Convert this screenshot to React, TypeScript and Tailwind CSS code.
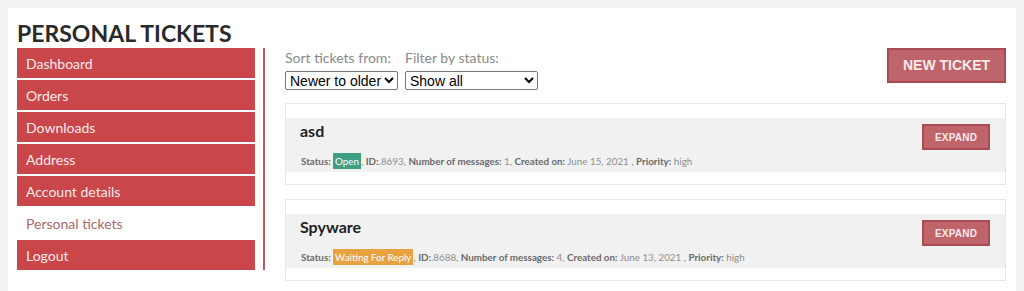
import React, { useState } from 'react';

type Ticket = {
  id: string;
  title: string;
  status: string;
  statusClass: string;
  messages: number;
  created: string;
  priority: string;
};

const MENU = ['Dashboard', 'Orders', 'Downloads', 'Address', 'Account details', 'Personal tickets', 'Logout'];

const TICKETS: Ticket[] = [
  { id: '.8693', title: 'asd', status: 'Open', statusClass: 'bg-[#3f9d82]', messages: 1, created: 'June 15, 2021', priority: 'high' },
  { id: '.8688', title: 'Spyware', status: 'Waiting For Reply', statusClass: 'bg-[#e8a23f]', messages: 4, created: 'June 13, 2021', priority: 'high' },
];

const TicketCard: React.FC<{ ticket: Ticket }> = ({ ticket }) => (
  <div className="border border-[#e7e7e7] bg-white pt-[14px] pb-[12px]">
    <div className="bg-[#f1f1f1] h-[54px] px-[15px] flex justify-between items-start">
      <div className="pt-[1px] pl-[-1px]">
        <h3 className="-ml-[1px] text-[16px] leading-[24px] font-bold text-[#1f1f1f]">{ticket.title}</h3>
        <p className="mt-[10px] text-[9.8px] leading-[16px] text-[#8e8e8e]">
          <span className="font-bold text-[#6a6a6a]">Status: </span>
          <span className={`${ticket.statusClass} text-white px-[2px] py-[2px]`}>{ticket.status}</span>
          , <span className="font-bold text-[#6a6a6a]">ID:</span>{ticket.id},{' '}
          <span className="font-bold text-[#6a6a6a]">Number of messages:</span> {ticket.messages},{' '}
          <span className="font-bold text-[#6a6a6a]">Created on:</span> {ticket.created} ,{' '}
          <span className="font-bold text-[#6a6a6a]">Priority:</span> {ticket.priority}
        </p>
      </div>
      <button className="mt-[6px] w-[68px] h-[26px] bg-[#bf646a] border-2 border-[#aa4a51] text-[#fbeaea] text-[10px] font-bold font-['Liberation_Sans',Arial,sans-serif] tracking-[0.2px]">
        EXPAND
      </button>
    </div>
  </div>
);

export default function App() {
  const [sort, setSort] = useState('new');
  const [filter, setFilter] = useState('all');

  return (
    <div className="min-h-[291px] bg-[#f2f2f2] pt-[8px] pl-[8px] font-['Lato','Noto_Sans',sans-serif]">
      <div className="w-[1008px] min-h-[283px] bg-white pl-[9px] pr-[10px] pt-[11px]">
        <h1 className="text-[23px] leading-[28px] font-bold text-[#2a2a2a]">PERSONAL TICKETS</h1>
        <div className="mt-[1px] flex">
          <nav className="w-[238px] flex flex-col gap-[2px]">
            {MENU.map((item) => {
              const active = item === 'Personal tickets';
              return (
                <a
                  key={item}
                  href="#"
                  className={`h-[30px] flex items-center pl-[9px] text-[14px] ${active ? 'bg-white text-[#a9686c]' : 'bg-[#c9464a] text-[#fbeaea]'}`}
                >
                  {item}
                </a>
              );
            })}
          </nav>
          <div className="ml-[8px] w-[2px] h-[222px] bg-[#c45a5e]" />
          <div className="ml-[20px] flex-1">
            <div className="flex justify-between items-start">
              <div className="flex gap-[7px]">
                <label className="flex flex-col">
                  <span className="text-[14px] leading-[20px] text-[#8a8a8a]">Sort tickets from:</span>
                  <select
                    value={sort}
                    onChange={(e) => setSort(e.target.value)}
                    className="mt-[3px] w-[113px] h-[19px] bg-white border border-[#767676] rounded-[2px] text-[14px] leading-[16px] text-black font-['Liberation_Sans',Arial,sans-serif]"
                  >
                    <option value="new">Newer to older</option>
                    <option value="old">Older to newer</option>
                  </select>
                </label>
                <label className="flex flex-col">
                  <span className="text-[14px] leading-[20px] text-[#8a8a8a]">Filter by status:</span>
                  <select
                    value={filter}
                    onChange={(e) => setFilter(e.target.value)}
                    className="mt-[3px] w-[133px] h-[19px] bg-white border border-[#767676] rounded-[2px] text-[14px] leading-[16px] text-black font-['Liberation_Sans',Arial,sans-serif]"
                  >
                    <option value="all">Show all</option>
                    <option value="open">Open</option>
                    <option value="waiting">Waiting For Reply</option>
                    <option value="closed">Closed</option>
                  </select>
                </label>
              </div>
              <button className="w-[119px] h-[35px] bg-[#bf646a] border-2 border-[#aa4a51] text-[#fbeaea] text-[14px] font-bold font-['Liberation_Sans',Arial,sans-serif]">
                NEW TICKET
              </button>
            </div>
            <div className="mt-[13px] flex flex-col gap-[14px]">
              {TICKETS.map((t) => (
                <TicketCard key={t.id} ticket={t} />
              ))}
            </div>
          </div>
        </div>
      </div>
    </div>
  );
}
